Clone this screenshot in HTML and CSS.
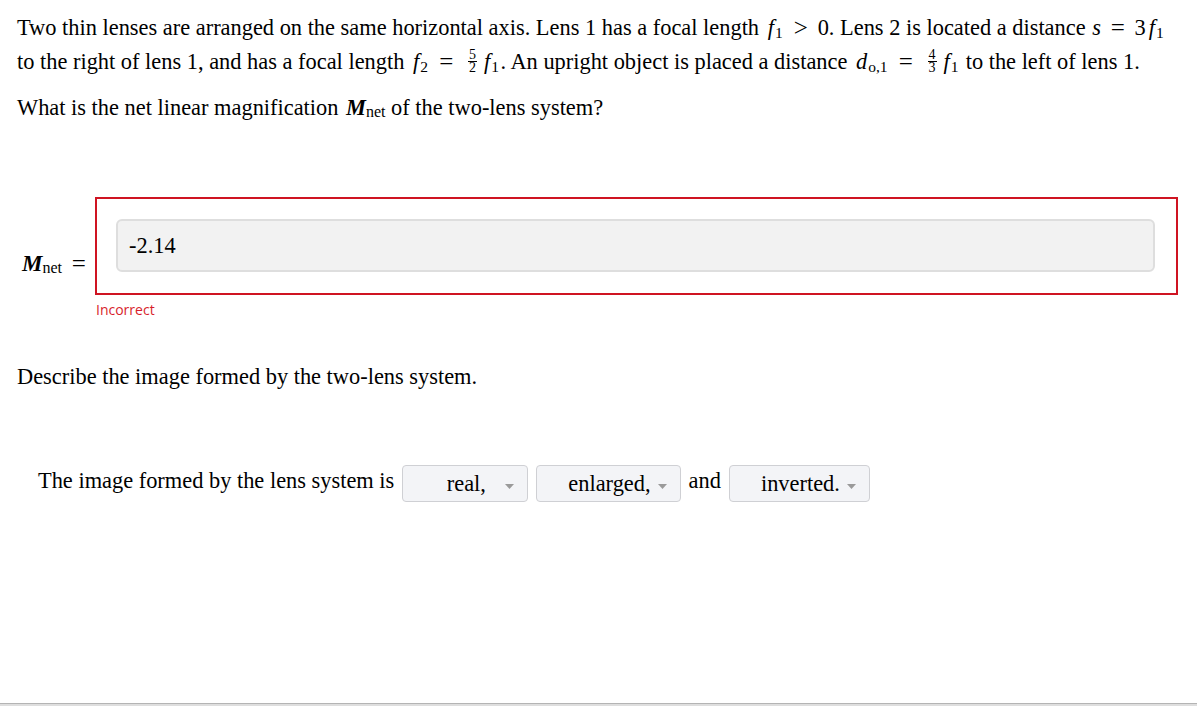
FILE: index.html
```html
<!DOCTYPE html>
<html>
<head>
<meta charset="utf-8">
<link rel="stylesheet" href="styles.css">
</head>
<body>
<div class="page">
  <main class="content">
    <p class="q">Two thin lenses are arranged on the same horizontal axis. Lens 1 has a focal length <i class="v">f</i><sub>1</sub><span class="rel">&gt;</span>0. Lens 2 is located a distance <i class="v s">s</i><span class="rel">=</span>3<i class="v">f</i><sub>1</sub><br>to the right of lens 1, and has a focal length <i class="v">f</i><sub>2</sub><span class="rel">=</span><span class="frac"><span class="num">5</span><span class="den">2</span></span><i class="v">f</i><sub>1</sub>. An upright object is placed a distance <i class="v">d</i><sub>o,1</sub><span class="rel">=</span><span class="frac"><span class="num">4</span><span class="den">3</span></span><i class="v">f</i><sub>1</sub> to the left of lens 1.</p>
    <p class="q2">What is the net linear magnification <b class="mb">M</b><sub class="big">net</sub> of the two-lens system?</p>
    <div class="answer">
      <div class="lbl"><b class="mb">M</b><sub class="big">net</sub><span class="rel">=</span></div>
      <div class="field">
        <div class="box"><div class="input">-2.14</div></div>
        <div class="fb">Incorrect</div>
      </div>
    </div>
    <p class="q3">Describe the image formed by the two-lens system.</p>
    <div class="sentence">
      <span class="txt">The image formed by the lens system is</span>
      <div class="sel"><span class="opt w-real">real,</span><svg class="caret" width="9" height="5" viewBox="0 0 9 5"><path d="M0 0H9L4.5 5Z"/></svg></div>
      <div class="sel"><span class="opt">enlarged,</span><svg class="caret" width="9" height="5" viewBox="0 0 9 5"><path d="M0 0H9L4.5 5Z"/></svg></div>
      <span class="txt">and</span>
      <div class="sel"><span class="opt">inverted.</span><svg class="caret" width="9" height="5" viewBox="0 0 9 5"><path d="M0 0H9L4.5 5Z"/></svg></div>
    </div>
  </main>
  <footer class="bar"></footer>
</div>
</body>
</html>
```
FILE: styles.css
```css
html, body {
  margin: 0;
  padding: 0;
}
body {
  font-family: "Liberation Serif", "Times New Roman", serif;
  font-size: 22.4px;
  color: #000;
  background: #fff;
}
.page {
  height: 100vh;
  display: flex;
  flex-direction: column;
}
.content {
  flex: 1;
  padding: 0 19px 0 17px;
}
p {
  margin: 0;
}
.q {
  margin-top: 11px;
  line-height: 34px;
  white-space: nowrap;
}
.q2 {
  margin-top: 12px;
  line-height: 34px;
}
.v {
  font-style: italic;
  padding: 0 1px 0 3px;
}
.v.s {
  padding: 0 0 0 1px;
}
sub {
  font-size: 15.5px;
  line-height: 0;
  vertical-align: -3px;
  padding-right: 1.5px;
}
sub.big {
  font-size: 16px;
  vertical-align: -2px;
  padding-right: 0;
}
.rel {
  display: inline-block;
  font-size: 25px;
  width: 17.5px;
  text-align: center;
  margin: 0 8px;
  line-height: 1;
  vertical-align: -1px;
}
.mb {
  font-style: italic;
  font-weight: bold;
  padding-left: 2px;
}
.frac {
  display: inline-block;
  vertical-align: -3px;
  font-size: 14px;
  line-height: 10px;
  text-align: center;
  margin: 0 4px 0 5px;
}
.frac .num,
.frac .den {
  display: block;
  padding: 0 1px;
}
.frac .num {
  border-bottom: 1px solid #000;
  padding-bottom: 1px;
}
.frac .den {
  padding-top: 1px;
}
.answer {
  margin-top: 72px;
  display: flex;
}
.lbl {
  width: 78px;
  box-sizing: border-box;
  padding-left: 3px;
  margin-top: 54px;
  line-height: 22px;
  white-space: nowrap;
}
.lbl .mb {
  font-size: 23px;
}
.lbl .rel {
  margin-right: 0;
}
.field {
  flex: 1;
}
.box {
  border: 2px solid #cf1422;
  padding: 20px 21px 21px 19px;
}
.input {
  height: 49px;
  line-height: 49px;
  border: 2px solid #dedede;
  background: #f2f2f2;
  border-radius: 6px;
  padding-left: 11px;
}
.fb {
  font-family: "Open Sans", "Liberation Sans", sans-serif;
  font-size: 14px;
  line-height: 17px;
  color: #d81e2c;
  margin-top: 6px;
  padding-left: 1px;
}
.q3 {
  margin-top: 44px;
  line-height: 30px;
}
.sentence {
  margin-top: 73px;
  padding-left: 21px;
  display: flex;
  align-items: center;
  gap: 8px;
}
.txt {
  line-height: 30px;
  margin-bottom: 6px;
}
.sel {
  display: flex;
  align-items: center;
  height: 35px;
  line-height: 36px;
  border: 1px solid #cfd0d4;
  border-radius: 4px;
  background: #f3f4f7;
  padding: 0 13px 0 31px;
}
.opt {
  display: inline-block;
  text-align: center;
}
.w-real {
  width: 64px;
}
.caret {
  margin-left: 7px;
  margin-top: 6px;
  fill: #9a9a9a;
}
.bar {
  height: 3px;
  box-sizing: border-box;
  border-top: 1px solid #b4b4b4;
  background: #dedede;
}
```
